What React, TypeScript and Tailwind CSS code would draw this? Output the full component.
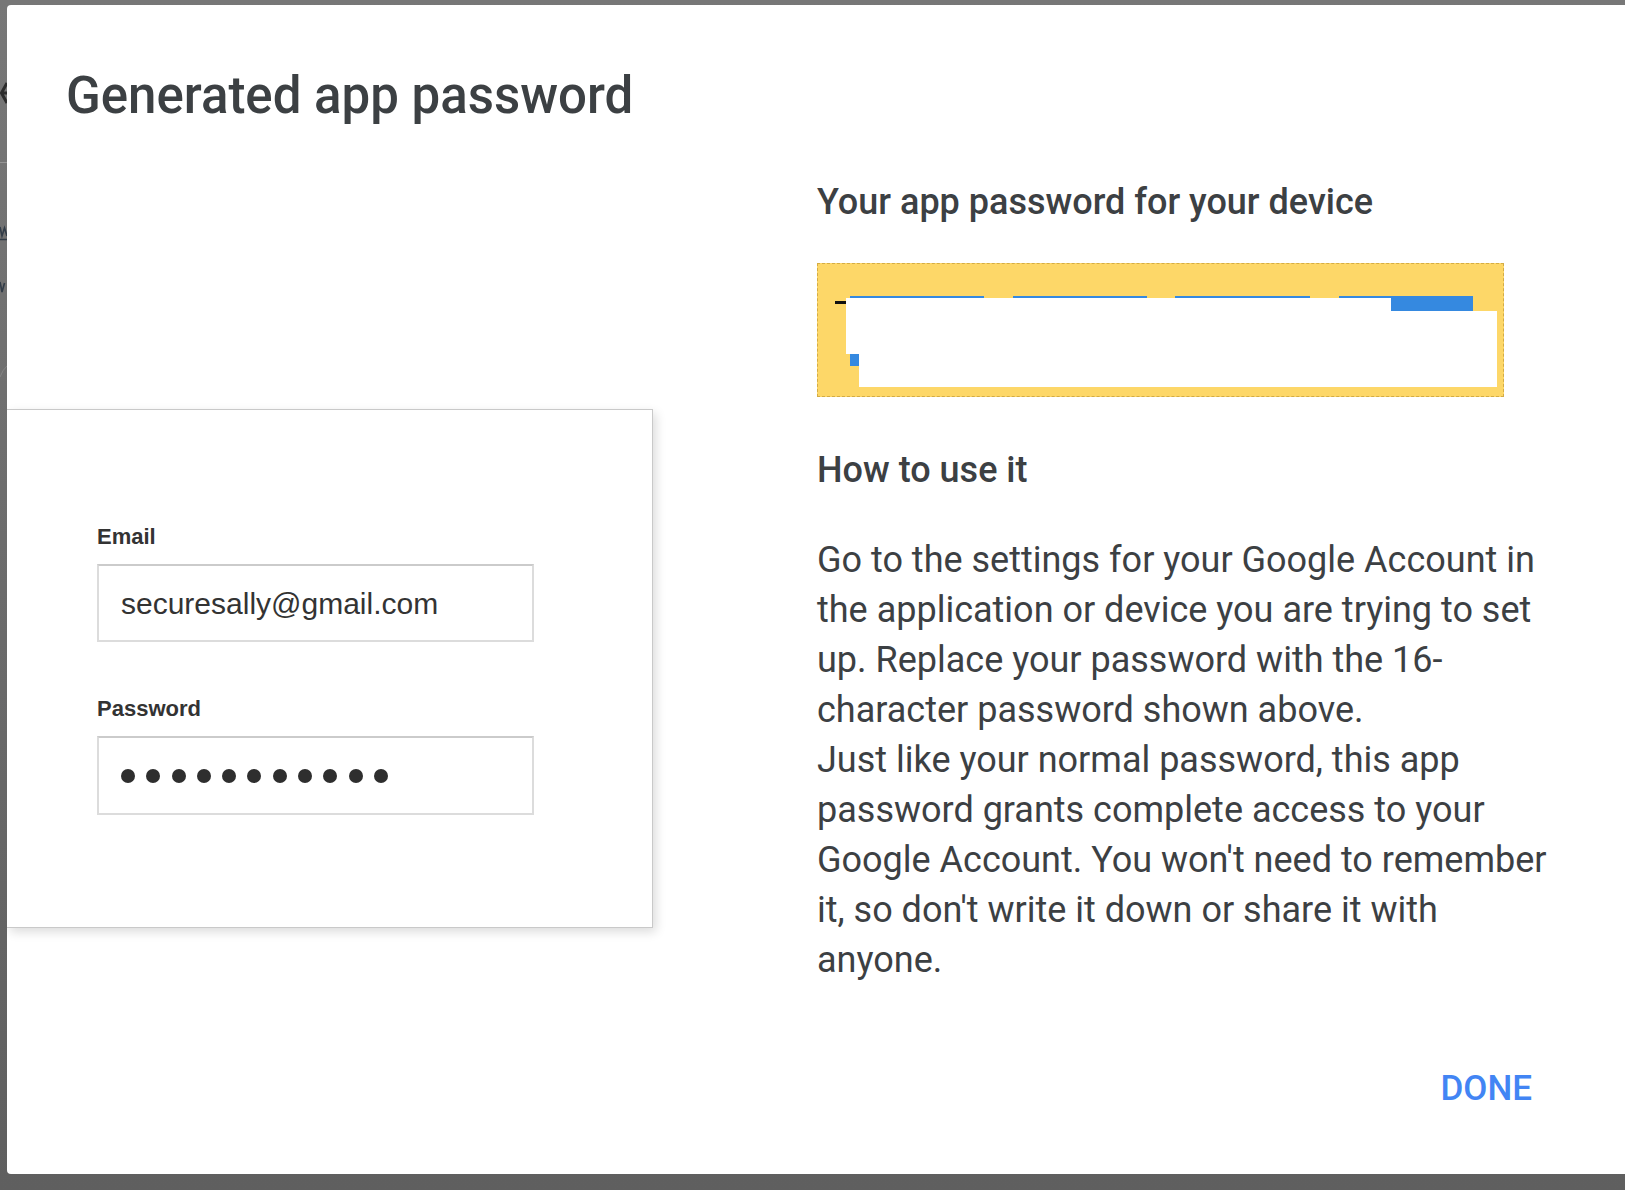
import React from "react";

const body = [
  "Go to the settings for your Google Account in",
  "the application or device you are trying to set",
  "up. Replace your password with the 16-",
  "character password shown above.",
];
const body2 = [
  "Just like your normal password, this app",
  "password grants complete access to your",
  "Google Account. You won't need to remember",
  "it, so don't write it down or share it with",
  "anyone.",
];

const Redacted = () => (
  <svg width="687" height="134" viewBox="0 0 687 134" className="block -m-px">
    <rect x="18" y="38" width="11" height="3" fill="#111" />
    <rect x="33" y="33" width="134" height="3" fill="#3589e0" />
    <rect x="196" y="33" width="134" height="3" fill="#3589e0" />
    <rect x="358" y="33" width="135" height="3" fill="#3589e0" />
    <rect x="522" y="33" width="52" height="3" fill="#3589e0" />
    <rect x="574" y="33" width="82" height="15" fill="#3589e0" />
    <rect x="29" y="35" width="545" height="56" fill="#fff" />
    <rect x="42" y="48" width="638" height="76" fill="#fff" />
    <rect x="33" y="91" width="9" height="12" fill="#3589e0" />
  </svg>
);

// the page behind the dim overlay, only a 7px sliver of it shows
const Sliver = () => (
  <div className="w-[7px] flex flex-col overflow-hidden opacity-75">
    <svg width="7" height="24" viewBox="0 0 7 24" className="mt-[76px]">
      <path d="M7 2 L1.5 12 L7 22" stroke="#151515" strokeWidth="3" fill="none" />
      <path d="M2 12 H7" stroke="#151515" strokeWidth="3" />
    </svg>
    <div className="mt-[57px] h-px bg-[#a0a0a0]" />
    <svg width="7" height="16" viewBox="0 0 7 16" className="mt-[62px]">
      <path d="M0 2 L2 11 L4.5 3 L7 11" stroke="#1d2b3b" strokeWidth="1.6" fill="none" />
      <path d="M0 14.5 H7" stroke="#1d2b3b" strokeWidth="1.5" />
    </svg>
    <svg width="7" height="14" viewBox="0 0 7 14" className="mt-[40px]">
      <path d="M0 1 L2 11 L4.5 2" stroke="#1d2b3b" strokeWidth="1.6" fill="none" />
    </svg>
    <svg width="7" height="14" viewBox="0 0 7 14" className="mt-[70px]">
      <path d="M0 12 Q3 4 7 1" stroke="#8c8c8c" strokeWidth="1" fill="none" />
    </svg>
  </div>
);

const App = () => {
  return (
    <div className="w-[1625px] h-[1190px] overflow-hidden flex bg-linear-to-b from-[#777777] to-[#5f5f5f] pt-[5px]">
      <Sliver />

      <div
        className="flex-1 h-[1169px] bg-white rounded-l-[4px] overflow-hidden flex flex-col text-[#3c4043]"
        style={{ fontFamily: "Roboto, 'Noto Sans', sans-serif" }}
      >
        <h1 className="pt-[63px] pl-[59px] text-[51px] leading-[56px] font-medium">
          Generated app password
        </h1>

        <div className="flex">
          {/* illustration */}
          <div className="w-[811px] pt-[285px]">
            <div
              className="w-[646px] h-[519px] bg-white border border-l-0 border-[#c9c9c9] shadow-[3px_4px_10px_rgba(0,0,0,0.14)] pl-[90px] pt-[114px] text-[#333]"
              style={{ fontFamily: "'Liberation Sans', Arial, sans-serif" }}
            >
              <p className="text-[22px] leading-[26px] font-bold">Email</p>
              <div className="mt-[14px] w-[437px] h-[78px] border-2 border-[#dcdcdc] border-t-[#cbcbcb] pl-[22px] flex items-center text-[30px]">
                securesally@gmail.com
              </div>
              <p className="mt-[54px] text-[22px] leading-[26px] font-bold">Password</p>
              <div className="mt-[14px] w-[437px] h-[79px] border-2 border-[#dcdcdc] border-t-[#cbcbcb] pl-[22px] flex items-center gap-[11.3px]">
                {Array.from({ length: 11 }).map((_, i) => (
                  <span key={i} className="w-[14px] h-[14px] rounded-full bg-[#2e2e2e]" />
                ))}
              </div>
            </div>
          </div>

          {/* instructions */}
          <div className="pt-[56px] -ml-px">
            <h2 className="text-[36px] leading-[44px] font-medium">Your app password for your device</h2>
            <div className="mt-[39px] w-[687px] h-[134px] bg-[#fdd768] border border-dashed border-[#d4ac45]">
              <Redacted />
            </div>
            <h2 className="mt-[51px] text-[36px] leading-[44px] font-medium">How to use it</h2>
            <div className="mt-[43px] text-[36px] leading-[50px]">
              {body.concat(body2).map((line) => (
                <p key={line} className="whitespace-nowrap">
                  {line}
                </p>
              ))}
            </div>
          </div>
        </div>

        <div className="mt-auto pb-[65px] pr-[93px] flex justify-end">
          <button className="text-[35px] leading-[40px] font-medium text-[#4285f4]">DONE</button>
        </div>
      </div>
    </div>
  );
};

export default App;
